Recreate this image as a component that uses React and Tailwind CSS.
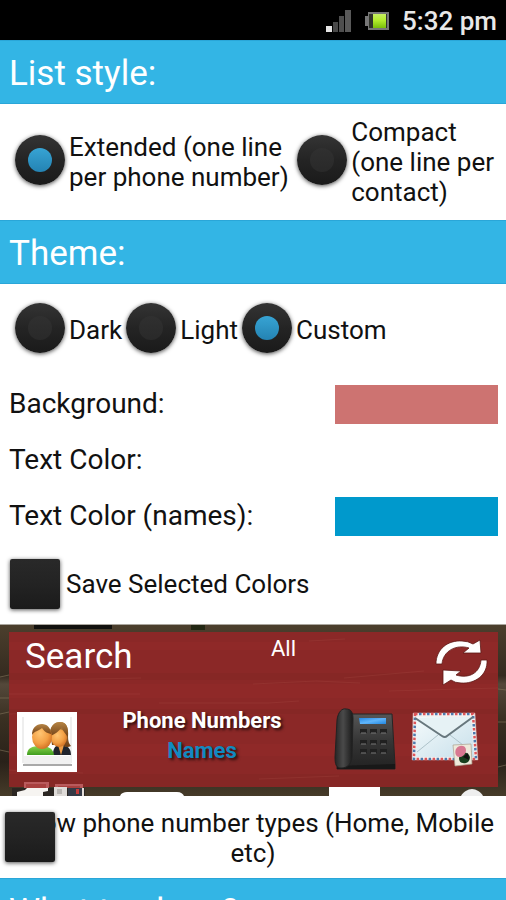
import React, { useState } from 'react';

const SectionHeader = ({ children }) => (
  <h2 className="border-y border-[#2aa6d8] bg-[#33b5e5] px-[9px] pt-2.5 pb-1.5 text-[35px] leading-[46px] text-white">
    {children}
  </h2>
);

const RadioOption = ({ name, value, current, onChange, children }) => (
  <label className="flex items-center gap-1">
    <input
      type="radio"
      name={name}
      value={value}
      checked={current === value}
      onChange={() => onChange(value)}
      className="grid size-[50px] shrink-0 appearance-none place-items-center rounded-full bg-linear-to-b from-[#343434] via-[#242424] to-[#1a1a1a] shadow-[0_1px_4px_#000000b0] before:size-6 before:rounded-full before:bg-linear-to-b before:from-[#303030] before:to-[#292929] checked:before:from-[#37a4d4] checked:before:to-[#2483b3]"
    />
    <span className="pt-1 whitespace-nowrap">{children}</span>
  </label>
);

const boxClass =
  'size-[50px] shrink-0 appearance-none rounded-xs bg-linear-to-b from-[#292929] via-[#232323] to-[#1b1b1b] shadow-[0_1px_4px_#000000b0] checked:from-[#33b5e5]';

const ColorRow = ({ id, label, value, onChange }) => (
  <div className="flex h-14 items-center justify-between pr-2 pl-[9px] text-[28px]">
    <label htmlFor={id}>{label}</label>
    <input
      id={id}
      type="color"
      value={value}
      onChange={(e) => onChange(e.target.value)}
      className="h-[39px] w-1/3 max-w-[163px] appearance-none border-0 bg-transparent p-0 [&::-webkit-color-swatch]:border-0 [&::-webkit-color-swatch-wrapper]:p-0"
    />
  </div>
);

const SignalIcon = () => (
  <svg viewBox="0 0 26 24" className="h-6 w-[26px]" aria-hidden="true">
    <rect x="0" y="17" width="6" height="6" fill="#e4e4e4" />
    <rect x="7" y="13" width="5" height="10" fill="#484848" />
    <rect x="13" y="7" width="5" height="16" fill="#4e4e4e" />
    <rect x="19" y="1" width="6" height="22" fill="#595959" />
  </svg>
);

const BatteryIcon = () => (
  <svg viewBox="0 0 26 20" className="h-5 w-[26px]" aria-hidden="true">
    <defs>
      <linearGradient id="charge" x1="0" y1="0" x2="0" y2="1">
        <stop offset="0" stopColor="#c6ef63" />
        <stop offset=".45" stopColor="#b3ec2c" />
        <stop offset="1" stopColor="#79be0a" />
      </linearGradient>
    </defs>
    <path d="M4 1h21v18H4v-4H1V5h3z" fill="#777" />
    <rect x="5" y="3" width="18" height="14" fill="#30332b" />
    <rect x="9" y="3" width="13" height="14" fill="url(#charge)" />
  </svg>
);

const WoodBackground = () => (
  <svg viewBox="0 0 506 172" preserveAspectRatio="none" className="absolute inset-0 size-full" aria-hidden="true">
    <defs>
      <linearGradient id="wood" x1="0" y1="0" x2="0" y2="1">
        <stop offset="0" stopColor="#4c3f2d" />
        <stop offset=".3" stopColor="#352b20" />
        <stop offset=".35" stopColor="#54483a" />
        <stop offset=".55" stopColor="#3a3022" />
        <stop offset=".8" stopColor="#292119" />
        <stop offset="1" stopColor="#463b29" />
      </linearGradient>
    </defs>
    <rect width="506" height="172" fill="url(#wood)" />
    <rect x="34" y="0" width="78" height="5" fill="#12110e" />
    <rect x="191" y="0" width="14" height="6" fill="#222713" />
    <path d="M0 53l9-2M0 74h9M0 90l9-2M0 126l9 2M498 65l8 1M498 98h8M498 143l8-2" stroke="#82745c" strokeOpacity=".6" />
    <rect y="0" width="506" height="1" fill="#aaa69e" />
  </svg>
);

// pieces of the home screen that peek out below the widget
const HomeScreenEdge = () => (
  <svg viewBox="0 0 506 16" preserveAspectRatio="none" className="absolute inset-x-0 bottom-0 h-4 w-full" aria-hidden="true">
    <path d="M24 2h25v6H24zM55 4h28v4H55z" fill="#b95a5c" />
    <path d="M26 4h20v4H26zM58 6h22v2H58z" fill="#a8403f" />
    <path d="M12 8h73v8H12z" fill="#2b2622" />
    <path d="M17 16v-4l8-2 2-2h21v3l-5 1v4z" fill="#f6f4f1" />
    <path d="M54 7h13v9H54z" fill="#dedbd8" />
    <path d="M57 9h5v5h-5z" fill="#b9b6b3" />
    <path d="M68 8h14v8H68z" fill="#343a46" />
    <path d="M76 9h3v5h-3z" fill="#c53b3b" />
    <path d="M82 8h2v8h-2z" fill="#e5dfda" />
    <path d="M120 16c1-3 4-4 7-4h50c4 0 6 2 7 4z" fill="#fff" />
    <path d="M329 7h51v9h-51z" fill="#fff" />
    <path d="M461 16c2-4 7-7 11-7s9 3 11 7z" fill="#eee" />
  </svg>
);

const WoodGrain = () => (
  <svg viewBox="0 0 489 155" preserveAspectRatio="none" className="absolute inset-0 size-full" aria-hidden="true">
    <rect width="489" height="155" fill="#8b2827" />
    <path d="M0 10h489v8H0zM0 52h489v14H0zM0 112h489v12H0z" fill="#962b2b" opacity=".4" />
    <path d="M0 41h489v7H0zM0 77h489v5H0zM0 142h489v13H0z" fill="#792320" opacity=".25" />
    <path
      d="M0 62h131M34 48l98-2M150 71h110l30-2M244 52l63-3 44 2M335 46l80-7M300 9l36-2M380 59l109-3M0 82l40-2M0 138l74 3M250 147l80-3"
      fill="none"
      stroke="#b65c50"
      strokeOpacity=".2"
    />
  </svg>
);

const RefreshIcon = () => (
  <svg viewBox="0 0 54 48" className="h-12 w-[54px]" aria-hidden="true">
    <g fill="#fff" stroke="#5d1815" strokeWidth=".8" strokeLinejoin="round">
      <path d="M2 26C2 11 14 2 28 3q6 0 11 3l7-4 1 13H29l6-5C22 6 9 13 8 26z" />
      <path d="M53 22c1 15-12 24-26 23q-6 0-10-3l-8 5V32l18 1-5 4c13 4 24-2 25-15z" />
    </g>
  </svg>
);

const PeopleIcon = () => (
  <svg viewBox="0 0 60 60" className="size-[60px]" aria-hidden="true">
    <defs>
      <radialGradient id="face" cx=".4" cy=".35" r=".7">
        <stop offset="0" stopColor="#ffc572" />
        <stop offset=".6" stopColor="#f3a045" />
        <stop offset="1" stopColor="#cf6d20" />
      </radialGradient>
      <linearGradient id="hair" x1="0" y1="0" x2="0" y2="1">
        <stop offset="0" stopColor="#b68444" />
        <stop offset="1" stopColor="#704015" />
      </linearGradient>
      <linearGradient id="shirt" x1="0" y1="0" x2="0" y2="1">
        <stop offset="0" stopColor="#8bd44d" />
        <stop offset="1" stopColor="#3f9d1e" />
      </linearGradient>
    </defs>
    <rect width="60" height="60" fill="#fff" />
    <path d="M6 5v46M54 5v46" stroke="#ddd" />
    <rect x="7" y="44" width="47" height="8" fill="#f1f1f1" />
    <path d="M6 53h49" stroke="#8d8d8d" strokeWidth="1.5" />
    <path d="M36 43c0-6 2-9 5-10l6 1c5 0 7 4 7 9z" fill="#20242c" />
    <path d="M41 33h6l-3 10z" fill="#eb9b45" />
    <path d="M33 20c1-7 5-10 10-10 8 0 8 8 8 14 0 5 1 8 3 10-3 2-7 1-8-1H35z" fill="url(#hair)" />
    <ellipse cx="42" cy="26" rx="8" ry="9" fill="url(#face)" />
    <path d="M33 24c6-2 9-5 12-9 1 5 4 7 6 10 1-10-2-15-8-15s-11 6-10 14z" fill="url(#hair)" />
    <path d="M10 43c0-7 5-9 13-9s13 2 14 9z" fill="url(#shirt)" />
    <ellipse cx="25" cy="25" rx="10" ry="12" fill="url(#face)" />
    <path d="M15 23c0-7 4-11 10-11 5 0 9 4 9 10-5-1-7-3-9-6-3 3-8 3-10 7z" fill="url(#hair)" />
  </svg>
);

const PhoneIcon = () => (
  <svg viewBox="0 0 64 64" className="size-16" aria-hidden="true">
    <defs>
      <linearGradient id="body" x1="0" y1="0" x2="0" y2="1">
        <stop offset="0" stopColor="#565656" />
        <stop offset=".5" stopColor="#353535" />
        <stop offset="1" stopColor="#222" />
      </linearGradient>
      <linearGradient id="handset">
        <stop offset="0" stopColor="#252525" />
        <stop offset=".45" stopColor="#4a4a4a" />
        <stop offset="1" stopColor="#191919" />
      </linearGradient>
      <linearGradient id="screen" x1="0" y1="0" x2="1" y2="1">
        <stop offset="0" stopColor="#2488e6" />
        <stop offset=".5" stopColor="#60b5fa" />
        <stop offset="1" stopColor="#2387df" />
      </linearGradient>
    </defs>
    <path d="M16 7h43l3 51v4H4v-5z" fill="url(#body)" stroke="#252525" />
    <path d="M4 59l58-2v5H4z" fill="#181818" />
    <path d="M4 13C5 5 9 1 13 2c5 0 7 3 7 10l-1 38c-1 8-5 11-11 11-5 0-6-4-6-11z" fill="url(#handset)" stroke="#222" />
    <path d="M26 11h27v6H27z" fill="url(#screen)" />
    <path d="M27 22h7v4h-7zM37 22h7v4h-7zM47 22h7v4h-7zM27 33h7v4h-7zM37 33h7v4h-7zM47 33h7v4h-7zM27 42h7v4h-7zM37 42h7v4h-7zM47 42h7v4h-7z" fill="#202020" />
    <path d="M28 26h5M38 26h5M48 26h5M28 37h5M38 37h5M48 37h5M28 46h5M38 46h5M48 46h5" stroke="#777" strokeWidth="1" />
  </svg>
);

const MailIcon = () => (
  <svg viewBox="0 0 68 56" className="h-14 w-[68px]" aria-hidden="true">
    <defs>
      <linearGradient id="paper" x1="0" y1="0" x2="1" y2="1">
        <stop offset="0" stopColor="#f4fafb" />
        <stop offset="1" stopColor="#c8e0eb" />
      </linearGradient>
    </defs>
    <path d="M2 2h62l3 47H1z" fill="#f3f1f0" stroke="#bd9a98" strokeWidth=".5" />
    <path d="M4 3h58l3 45H3z" fill="none" stroke="#dd5458" strokeWidth="2.5" strokeDasharray="2.5 5.5" />
    <path d="M4 3h58l3 45H3z" fill="none" stroke="#4c79ad" strokeWidth="2.5" strokeDasharray="2.5 5.5" strokeDashoffset="4" />
    <path d="M6 6h54l3 40H5z" fill="url(#paper)" />
    <path d="M6 41l21-17M39 24l22 17" stroke="#aec3ca" />
    <path d="M4 7l27 18q3 2 5 0L62 6" fill="#e6f2f5" stroke="#67777d" strokeWidth="2" />
    <path d="M42 34l18-1 1 20-17 2z" fill="#eee9da" stroke="#aaa08e" strokeWidth=".7" />
    <path d="M49 43c4-3 9-1 10 3 0 4-3 7-7 6-4 0-5-5-3-9z" fill="#173f1d" />
    <path d="M45 38c3-5 10-4 10 1 0 6-7 9-9 6-2-1-2-5-1-7z" fill="#d77891" />
    <path d="M52 46l5-4 1 7z" fill="#111" />
  </svg>
);

const WidgetPreview = () => (
  <div className="relative h-[172px] overflow-hidden pt-2 pr-2 pl-[9px]">
    <WoodBackground />
    <div className="relative h-[155px]">
      <WoodGrain />
      <div className="relative flex items-start justify-between pr-2.5 pl-4">
        <input
          type="text"
          aria-label="Search contacts"
          placeholder="Search"
          className="w-[200px] bg-transparent text-[35px] leading-[50px] text-white outline-none placeholder:text-white placeholder:opacity-100"
        />
        <button className="mr-auto px-[46px] pt-1 text-[22px] leading-[26px] text-white">All</button>
        <button aria-label="Refresh" className="pt-1.5"><RefreshIcon /></button>
      </div>
      <div className="relative flex items-center pt-[26px] pr-[19px] pl-2">
        <PeopleIcon />
        <div className="-mt-3 grow pr-1.5 text-center text-[22px] leading-[30px] font-bold text-white [text-shadow:2px_2px_3px_#000000b0]">
          <p>Phone Numbers</p>
          <p className="text-[#118ac0]">Names</p>
        </div>
        <div className="-mt-1.5 flex items-center gap-3.5">
          <button aria-label="Call"><PhoneIcon /></button>
          <button aria-label="Send message"><MailIcon /></button>
        </div>
      </div>
    </div>
    <HomeScreenEdge />
  </div>
);

const App = () => {
  const [listStyle, setListStyle] = useState('extended');
  const [theme, setTheme] = useState('custom');
  const [colors, setColors] = useState({ background: '#cd7371', text: '#ffffff', names: '#0099cc' });

  const setColor = (key) => (value) => setColors({ ...colors, [key]: value });

  return (
    <div className="h-screen overflow-hidden bg-white font-['Roboto',sans-serif] text-[26px] leading-[30px] text-[#111]">
      <header className="flex h-10 items-center justify-end gap-3 bg-black pt-0.5 pr-[9px] font-medium text-[#e8e8e8]">
        <SignalIcon />
        <BatteryIcon />
        <span>5:32 pm</span>
      </header>

      <SectionHeader>List style:</SectionHeader>
      <div className="flex h-[116px] items-center justify-between pr-3 pb-1 pl-[15px]">
        <RadioOption name="style" value="extended" current={listStyle} onChange={setListStyle}>
          Extended (one line<br />per phone number)
        </RadioOption>
        <RadioOption name="style" value="compact" current={listStyle} onChange={setListStyle}>
          Compact<br />(one line per<br />contact)
        </RadioOption>
      </div>

      <SectionHeader>Theme:</SectionHeader>
      <div className="flex items-center gap-1 pt-[19px] pb-[23px] pl-[15px]">
        <RadioOption name="theme" value="dark" current={theme} onChange={setTheme}>Dark</RadioOption>
        <RadioOption name="theme" value="light" current={theme} onChange={setTheme}>Light</RadioOption>
        <RadioOption name="theme" value="custom" current={theme} onChange={setTheme}>Custom</RadioOption>
      </div>
      <ColorRow id="background" label="Background:" value={colors.background} onChange={setColor('background')} />
      <ColorRow id="text" label="Text Color:" value={colors.text} onChange={setColor('text')} />
      <ColorRow id="names" label="Text Color (names):" value={colors.names} onChange={setColor('names')} />
      <label className="flex h-20 items-center gap-1.5 pl-2.5">
        <input type="checkbox" className={boxClass} />
        Save Selected Colors
      </label>

      <WidgetPreview />

      <label className="relative block px-1 pt-3 pb-2.5 text-center">
        <input type="checkbox" className={`${boxClass} absolute top-4 left-[5px]`} />
        Show phone number types (Home, Mobile etc)
      </label>
      <SectionHeader>What to show?</SectionHeader>
    </div>
  );
};

export default App;
